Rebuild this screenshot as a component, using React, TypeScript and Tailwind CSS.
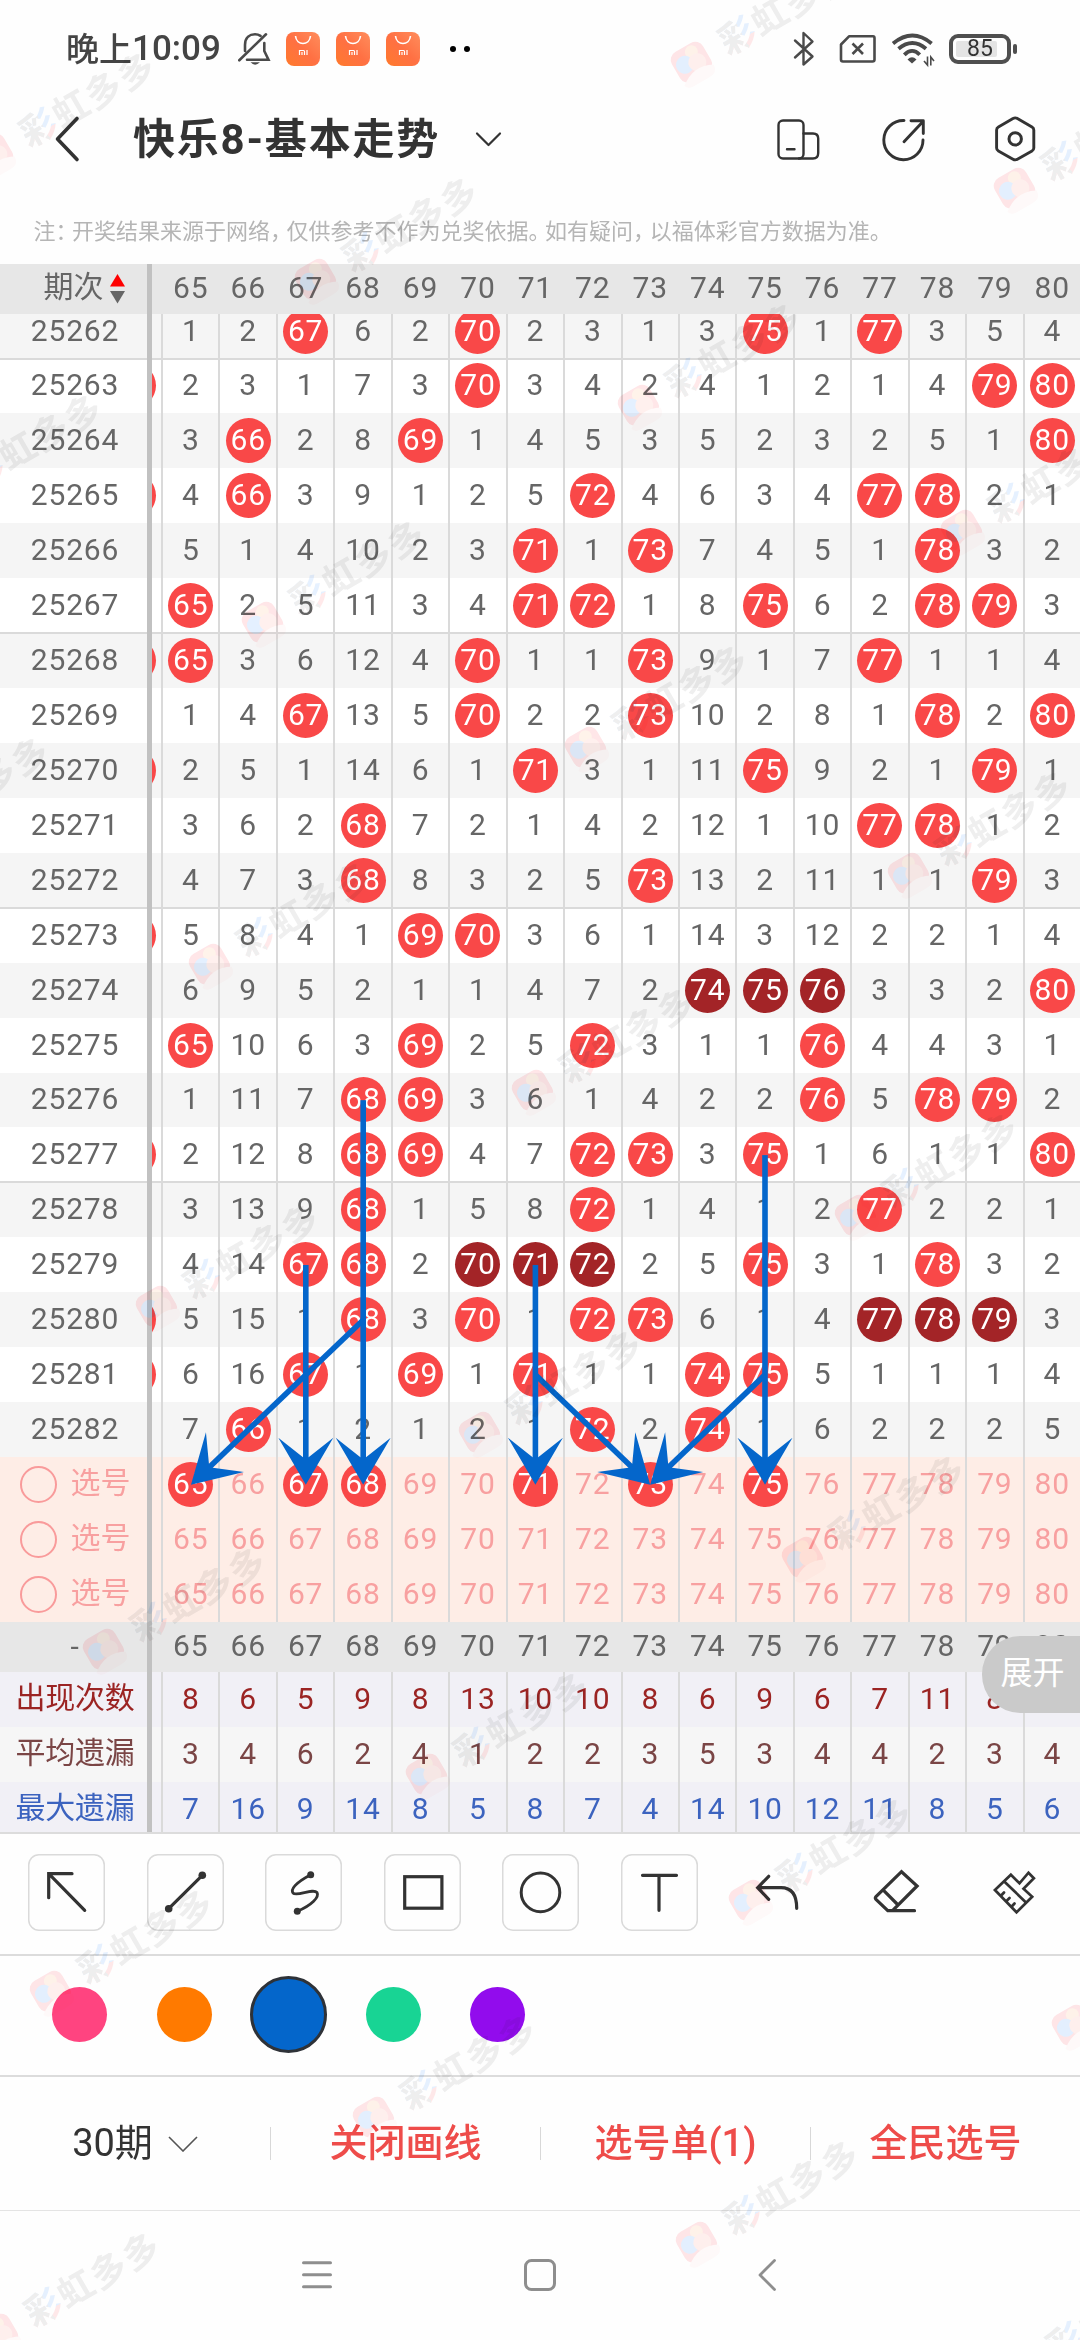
import { type ReactNode } from 'react';
import clsx from 'clsx';

const FIRST = 65;
const COLUMNS = Array.from({ length: 16 }, (_, i) => FIRST + i);

// values from 65 up are drawn numbers, smaller ones count the missed draws
const DRAWS: { id: number; prev?: boolean; values: number[] }[] = [
    { id: 25262, values: [1, 2, 67, 6, 2, 70, 2, 3, 1, 3, 75, 1, 77, 3, 5, 4] },
    { id: 25263, prev: true, values: [2, 3, 1, 7, 3, 70, 3, 4, 2, 4, 1, 2, 1, 4, 79, 80] },
    { id: 25264, values: [3, 66, 2, 8, 69, 1, 4, 5, 3, 5, 2, 3, 2, 5, 1, 80] },
    { id: 25265, prev: true, values: [4, 66, 3, 9, 1, 2, 5, 72, 4, 6, 3, 4, 77, 78, 2, 1] },
    { id: 25266, values: [5, 1, 4, 10, 2, 3, 71, 1, 73, 7, 4, 5, 1, 78, 3, 2] },
    { id: 25267, values: [65, 2, 5, 11, 3, 4, 71, 72, 1, 8, 75, 6, 2, 78, 79, 3] },
    { id: 25268, prev: true, values: [65, 3, 6, 12, 4, 70, 1, 1, 73, 9, 1, 7, 77, 1, 1, 4] },
    { id: 25269, values: [1, 4, 67, 13, 5, 70, 2, 2, 73, 10, 2, 8, 1, 78, 2, 80] },
    { id: 25270, prev: true, values: [2, 5, 1, 14, 6, 1, 71, 3, 1, 11, 75, 9, 2, 1, 79, 1] },
    { id: 25271, values: [3, 6, 2, 68, 7, 2, 1, 4, 2, 12, 1, 10, 77, 78, 1, 2] },
    { id: 25272, values: [4, 7, 3, 68, 8, 3, 2, 5, 73, 13, 2, 11, 1, 1, 79, 3] },
    { id: 25273, prev: true, values: [5, 8, 4, 1, 69, 70, 3, 6, 1, 14, 3, 12, 2, 2, 1, 4] },
    { id: 25274, values: [6, 9, 5, 2, 1, 1, 4, 7, 2, 74, 75, 76, 3, 3, 2, 80] },
    { id: 25275, values: [65, 10, 6, 3, 69, 2, 5, 72, 3, 1, 1, 76, 4, 4, 3, 1] },
    { id: 25276, values: [1, 11, 7, 68, 69, 3, 6, 1, 4, 2, 2, 76, 5, 78, 79, 2] },
    { id: 25277, prev: true, values: [2, 12, 8, 68, 69, 4, 7, 72, 73, 3, 75, 1, 6, 1, 1, 80] },
    { id: 25278, values: [3, 13, 9, 68, 1, 5, 8, 72, 1, 4, 1, 2, 77, 2, 2, 1] },
    { id: 25279, values: [4, 14, 67, 68, 2, 70, 71, 72, 2, 5, 75, 3, 1, 78, 3, 2] },
    { id: 25280, prev: true, values: [5, 15, 1, 68, 3, 70, 1, 72, 73, 6, 1, 4, 77, 78, 79, 3] },
    { id: 25281, prev: true, values: [6, 16, 67, 1, 69, 1, 71, 1, 1, 74, 75, 5, 1, 1, 1, 4] },
    { id: 25282, values: [7, 66, 1, 2, 1, 2, 1, 72, 2, 74, 1, 6, 2, 2, 2, 5] },
];

const PICKS = [[65, 67, 68, 71, 73, 75], [], []];

const STATS = [
    { label: '出现次数', row: 'bg-[#f1f0f6] text-[#9b2423]', values: [8, 6, 5, 9, 8, 13, 10, 10, 8, 6, 9, 6, 7, 11, 8, 8] },
    { label: '平均遗漏', row: 'bg-[#f6f6f6] text-[#7a4545]', values: [3, 4, 6, 2, 4, 1, 2, 2, 3, 5, 3, 4, 4, 2, 3, 4] },
    { label: '最大遗漏', row: 'bg-[#f1f0f6] text-[#3c63bf]', values: [7, 16, 9, 14, 8, 5, 8, 7, 4, 14, 10, 12, 11, 8, 5, 6] },
];

// row 0 is draw 25262, row 21 is the first pick row
const ARROWS = [
    { from: [68, 14], to: [68, 21] },
    { from: [67, 17], to: [67, 21] },
    { from: [71, 17], to: [71, 21] },
    { from: [75, 15], to: [75, 21] },
    { from: [68, 18], to: [65, 21] },
    { from: [71, 19], to: [73, 21] },
    { from: [75, 19], to: [73, 21] },
];

const ROW = 54.93;

// hits that sit in a run of three or more neighbours get the dark ball
function inStreak(values: number[], i: number) {
    let start = i;
    let end = i;
    while (values[start - 1] >= FIRST) start--;
    while (values[end + 1] >= FIRST) end++;
    return end - start >= 2;
}

function Ball({ value, dark }: { value: number; dark?: boolean }) {
    return (
        <span className={clsx('flex h-[45px] w-[45px] shrink-0 items-center justify-center rounded-full text-white', dark ? 'bg-[#a32427]' : 'bg-[#f94848]')}>
            <span className="-mt-px">{value}</span>
        </span>
    );
}

type RowProps = { className?: string; label: ReactNode; gutter?: ReactNode; cells: ReactNode[]; lines?: boolean };

function ChartRow({ className, label, gutter, cells, lines = true }: RowProps) {
    return (
        <div className={clsx('flex shrink-0', className)}>
            <div className="flex w-[147px] items-center justify-center pl-[3px]">{label}</div>
            <div className="w-[5px] bg-[#c1c1c1]" />
            <div className="flex w-[9px] items-center overflow-hidden">{gutter}</div>
            <div className="grid flex-1 grid-cols-16">
                {cells.map((cell, i) => (
                    <div key={i} className={clsx('flex items-center justify-center border-l-2', lines ? 'border-[#dadada]' : 'border-transparent')}>
                        {cell}
                    </div>
                ))}
            </div>
        </div>
    );
}

const num = (n: number) => <span className="-mt-px">{n}</span>;

function Arrows() {
    const x = (n: number) => 191 + (n - FIRST) * 57.4;
    const y = (r: number) => -10.3 + (r + 0.5) * ROW;
    return (
        <svg className="pointer-events-none absolute left-0 top-0" width="1080" height="1308" viewBox="0 0 1080 1308">
            {ARROWS.map(({ from, to }, i) => {
                const x1 = x(from[0]);
                const y1 = y(from[1]);
                const x2 = x(to[0]);
                const y2 = y(to[1]);
                const angle = (Math.atan2(y2 - y1, x2 - x1) * 180) / Math.PI;
                const length = Math.hypot(x2 - x1, y2 - y1);
                return (
                    <g key={i} transform={`translate(${x2} ${y2}) rotate(${angle})`} fill="#0466cb">
                        <rect x={-length} y="-2.8" width={length - 26} height="5.6" />
                        <path d="M0 0L-47 -27.5L-27.5 -2.8V2.8L-47 27.5Z" />
                    </g>
                );
            })}
        </svg>
    );
}

function StatusBar() {
    return (
        <div className="flex h-[98px] items-center text-[#444]">
            <div className="ml-[66px] mt-px flex w-[170px] items-center whitespace-nowrap font-medium">
                <span className="text-[33px]">晚上</span>
                <span className="text-[35px]">10:09</span>
            </div>
            <svg width="36" height="36" viewBox="0 0 36 36" fill="none" stroke="#4a4a4a" strokeWidth="2.6" strokeLinecap="round">
                <path d="M3.3 29.3L30 3.3M9 20V14C9 6 14 3.2 19 3.2Q22 3.2 24.5 4.8M28.3 12V20L32.5 28.7H11" />
                <path d="M14.5 31.3H24Q19 36 14.5 31.3Z" fill="#4a4a4a" stroke="none" />
            </svg>
            <div className="ml-[14px] flex gap-4">
                {[0, 1, 2].map(i => (
                    <div key={i} className="flex h-[34px] w-[34px] flex-col items-center rounded-[8px] bg-linear-to-tr from-[#ff7a2a] via-[#ff7043] to-[#ff8d5c]">
                        <svg width="34" height="34" viewBox="0 0 34 34" fill="none" stroke="#fff">
                            <path d="M9.5 4C10.5 14 23.5 14 24.5 4" strokeWidth="1.6" />
                            <path d="M13.5 23V18.5H17.5Q18.5 18.5 18.5 19.5V23M16 20V23M21 18V23" strokeWidth="1.2" />
                        </svg>
                    </div>
                ))}
            </div>
            <div className="ml-[30px] flex gap-2">
                <span className="h-[6px] w-[6px] rounded-full bg-black" />
                <span className="h-[6px] w-[6px] rounded-full bg-black" />
            </div>
            <svg className="ml-[323px]" width="22" height="36" viewBox="0 0 22 36" fill="none" stroke="#4a4a4a" strokeWidth="2.4" strokeLinejoin="round" strokeLinecap="round">
                <path d="M2 9.5L19.5 25.5L10.5 33.5V2L19.5 10.5L2 26.5" />
            </svg>
            <svg className="ml-[24px]" width="38" height="30" viewBox="0 0 38 30" fill="none" stroke="#4a4a4a" strokeWidth="2.6" strokeLinejoin="round">
                <path d="M10 2.3H34Q35.5 2.3 35.5 4V25.5Q35.5 27.5 33.5 27.5H4Q2 27.5 2 25.5V10.5Z" />
                <path d="M13.5 9.5L24 20M24 9.5L13.5 20" />
            </svg>
            <svg className="ml-[14px] mt-[3px]" width="44" height="36" viewBox="0 0 44 36" fill="none" stroke="#4a4a4a" strokeWidth="3.8">
                <path d="M2 11.5Q21.5 -4.5 40.6 11.5M7.5 16.8Q21.5 5.2 35 16.8M13.3 22.8Q21.2 15 28.7 22.8" />
                <path d="M16.5 27.5Q21 23 25.5 27.5L21 31.5Z" fill="#4a4a4a" stroke="none" />
                <path d="M36.5 24.5V33L33 29M39.8 33.5V25L43 29" strokeWidth="1.6" />
            </svg>
            <div className="ml-[14px] flex h-[30px] w-[62px] rounded-[9px] border-[4px] border-[#4f4f4f] p-[3px]">
                <div className="relative h-full w-[41px] rounded-[2px] bg-[#e4e4e4]">
                    <span className="absolute -top-[7px] left-[11px] text-[23px] leading-[30px] text-[#333]">85</span>
                </div>
            </div>
            <span className="ml-[2px] h-[10px] w-[4px] rounded-[2px] bg-[#4f4f4f]" />
        </div>
    );
}

function TitleBar() {
    return (
        <div className="flex h-[83px] items-center">
            <svg className="ml-[54px]" width="28" height="48" viewBox="0 0 28 48" fill="none" stroke="#333" strokeWidth="3.6" strokeLinecap="round" strokeLinejoin="round">
                <path d="M23 3.5L3.5 24L23 44.5" />
            </svg>
            <h1 className="ml-[51px] w-[306px] whitespace-nowrap text-[42px] font-bold tracking-[1.8px] text-[#333]">快乐8-基本走势</h1>
            <svg className="ml-[36px]" width="28" height="16" viewBox="0 0 28 16" fill="none" stroke="#333" strokeWidth="2.2" strokeLinecap="round" strokeLinejoin="round">
                <path d="M2 2.5L13.5 14L25 2.5" />
            </svg>
            <div className="ml-auto mr-[42px] flex items-center">
                <svg width="46" height="46" viewBox="775 117 46 46" fill="none" stroke="#333" strokeWidth="2.4" strokeLinecap="round">
                    <rect x="778.5" y="121.5" width="25" height="38" rx="4.5" />
                    <path d="M803.5 134.5H813Q818.2 134.5 818.2 139.5V154Q818.2 159.5 813 159.5H799M787 150.3H794.5" />
                </svg>
                <svg className="ml-[58px]" width="50" height="46" viewBox="879 117 50 46" fill="none" stroke="#333" strokeWidth="2.9" strokeLinecap="round" strokeLinejoin="round">
                    <path d="M904 121.5A19.6 19.6 0 1 0 923 141M904 142.7L923 122.5M911 121.8H923.3V134.5" />
                </svg>
                <svg className="ml-[63px]" width="46" height="50" viewBox="992 114.5 46 50" fill="none" stroke="#333" strokeWidth="2.9" strokeLinejoin="round">
                    <path d="M1013 119Q1015.2 117.8 1017.4 119L1032 127.5Q1033.8 128.5 1033.8 130.5V148.5Q1033.8 150.5 1032 151.5L1017.4 159.7Q1015.2 161 1013 159.7L998.4 151.5Q996.6 150.5 996.6 148.5V130.5Q996.6 128.5 998.4 127.5Z" />
                    <circle cx="1015.2" cy="139.4" r="6.2" strokeWidth="3" />
                </svg>
            </div>
        </div>
    );
}

function Notice() {
    const punct = 'tracking-[-5.5px]';
    return (
        <p className="flex h-[83px] items-center whitespace-nowrap pl-[33.5px] pt-[18px] text-[22px] text-[#b5b5b5]">
            注<span className={punct}>：</span>开奖结果来源于网络<span className={punct}>，</span>仅供参考不作为兑奖依据<span className={punct}>。</span>如有疑问<span className={punct}>，</span>以福体彩官方数据为准。
        </p>
    );
}

function TrendChart() {
    return (
        <div className="flex h-[1569px] flex-col overflow-hidden text-[30px] leading-none tracking-[0.8px] text-[#666]">
            <ChartRow
                className="h-[50px] bg-[#e7e7e7]"
                lines={false}
                label={
                    <span className="flex items-center gap-[6px] pb-1 pl-[18px] tracking-normal">
                        期次
                        <svg className="mt-1" width="15" height="30" viewBox="0 0 15 30">
                            <path d="M7.5 0L15 12.5H0Z" fill="#fe0000" />
                            <path d="M0 17H15L7.5 29.5Z" fill="#666" />
                        </svg>
                    </span>
                }
                cells={COLUMNS.map(num)}
            />
            <div className="relative h-[1308px] shrink-0 overflow-hidden">
                <div className="-mt-[10.3px]">
                    {DRAWS.map((draw, r) => (
                        <ChartRow
                            key={draw.id}
                            className={clsx(
                                'h-[54.93px]',
                                r % 2 ? 'bg-white' : 'bg-[#f5f5f5]',
                                r % 5 === 1 && 'shadow-[0_-1px_0_#dadada,inset_0_1px_0_#dadada]'
                            )}
                            label={num(draw.id)}
                            gutter={draw.prev && <span className="-ml-[41px] h-[45px] w-[45px] shrink-0 rounded-full bg-[#f94848]" />}
                            cells={draw.values.map((v, i) => (v >= FIRST ? <Ball value={v} dark={inStreak(draw.values, i)} /> : num(v)))}
                        />
                    ))}
                    {PICKS.map((picked, r) => (
                        <ChartRow
                            key={r}
                            className="h-[54.93px] bg-[#feede6] text-[#f8a0a0]"
                            label={
                                <span className="flex items-center gap-[14px] tracking-normal">
                                    <span className="h-[37px] w-[37px] rounded-full border-2 border-[#f99b9b]" />
                                    <span className="-mt-0.5">选号</span>
                                </span>
                            }
                            cells={COLUMNS.map(n => ((picked as number[]).includes(n) ? <Ball value={n} /> : num(n)))}
                        />
                    ))}
                </div>
                <Arrows />
            </div>
            <ChartRow className="h-[50px] bg-[#e7e7e7]" lines={false} label={<span>-</span>} cells={COLUMNS.map(num)} />
            {STATS.map(s => (
                <ChartRow
                    key={s.label}
                    className={clsx('h-[55px]', s.row)}
                    label={<span className="-mt-0.5 tracking-[-0.3px]">{s.label}</span>}
                    cells={s.values.map(num)}
                />
            ))}
        </div>
    );
}

const TOOLS = [
    <path d="M44 19.7H20.7V43.7M20.7 19.7L56.7 56.3" />,
    <>
        <path d="M21.7 54.7L55.3 21.3" />
        <circle cx="21.7" cy="54.7" r="3.8" fill="#333" stroke="none" />
        <circle cx="55.3" cy="21.3" r="3.8" fill="#333" stroke="none" />
    </>,
    <>
        <path d="M45.7 20.7C30 29 25.5 35.5 28 39C31.5 43 48 34 52 38.5C54.5 43 47 51 32.3 57.3" strokeWidth="2.8" />
        <circle cx="45.7" cy="20.7" r="3.5" fill="#333" stroke="none" />
        <circle cx="32.3" cy="57.3" r="3.5" fill="#333" stroke="none" />
    </>,
    <rect x="20.7" y="22.7" width="37.2" height="31.5" />,
    <circle cx="38.5" cy="38.4" r="19.3" strokeWidth="3" />,
    <path d="M21.5 21.3H55.5M38 21.3V56.3" />,
];

const ACTIONS = [
    <path d="M29.7 22.3L18.7 33.7L29.7 45.3M19 33.7H42Q57.7 33.7 57.7 54.3" />,
    <path d="M43.5 17.7L59.1 32L34.5 56.7H29.8L18 45.5Q16.7 44 18 42.5ZM25.8 36.7L39.1 50M34 56.7H56.5" />,
    <path d="M34.9 20.7L43.5 29.3L52.5 18.7L57.9 24.3L47.5 34.7L56.2 42.7L40.5 58.3L18.9 36ZM28.5 27.7L49.2 47.7M24.7 42L28 38.5M30 47.5L33.5 44M35.3 53L38.5 49.5" strokeWidth="2.7" />,
];

function ToolIcon({ children }: { children: ReactNode }) {
    return (
        <svg width="77" height="77" viewBox="0 0 77 77" fill="none" stroke="#333" strokeWidth="3.2" strokeLinecap="round">
            {children}
        </svg>
    );
}

function DrawingTools() {
    return (
        <>
            <div className="flex h-[122px] items-start justify-between border-t-2 border-[#dcdcdc] pl-[28px] pr-[27px] pt-[20px]">
                {TOOLS.map((icon, i) => (
                    <button key={i} className="h-[77px] w-[77px] rounded-[11px] shadow-[inset_0_0_0_1.5px_#dadada]">
                        <ToolIcon>{icon}</ToolIcon>
                    </button>
                ))}
                {ACTIONS.map((icon, i) => (
                    <button key={i} className="h-[77px] w-[77px]">
                        <ToolIcon>{icon}</ToolIcon>
                    </button>
                ))}
            </div>
            <div className="flex h-[121px] items-center border-t-2 border-[#dcdcdc] pb-[2px] pl-[52px]">
                <span className="h-[55px] w-[55px] rounded-full bg-[#ff4480]" />
                <span className="ml-[50px] h-[55px] w-[55px] rounded-full bg-[#ff7a00]" />
                <span className="ml-[38px] h-[77px] w-[77px] rounded-full border-[3px] border-[#2e3238] bg-[#0466cb]" />
                <span className="ml-[39px] h-[55px] w-[55px] rounded-full bg-[#18d494]" />
                <span className="ml-[49px] h-[55px] w-[55px] rounded-full bg-[#920ced]" />
            </div>
        </>
    );
}

function BottomBar() {
    return (
        <div className="flex h-[135px] items-center border-t-2 border-[#dcdcdc] text-[38px] leading-none">
            <div className="flex flex-1 items-center justify-center gap-[15px] text-[#333]">
                <span className="-mt-0.5">30期</span>
                <svg width="30" height="16" viewBox="0 0 30 16" fill="none" stroke="#555" strokeWidth="1.6">
                    <path d="M1 1L15 15L29 1" />
                </svg>
            </div>
            {['关闭画线', '选号单(1)', '全民选号'].map(text => (
                <div key={text} className="flex flex-1 items-center">
                    <span className="h-[33px] w-px bg-[#d8d8d8]" />
                    <span className="-mt-0.5 flex-1 text-center font-medium text-[#ee4c4a]">{text}</span>
                </div>
            ))}
        </div>
    );
}

function SystemNav() {
    return (
        <div className="flex h-[130px] border-t border-[#e4e4e4] pt-[46px]">
            <svg className="ml-[301px]" width="32" height="36" viewBox="0 0 32 36" stroke="#8e8e8e" strokeWidth="3" strokeLinecap="round">
                <path d="M2.5 5.7H29.5M2.5 17.7H29.5M2.5 29.7H29.5" />
            </svg>
            <svg className="ml-[189px]" width="36" height="36" viewBox="0 0 36 36" fill="none" stroke="#8e8e8e" strokeWidth="3">
                <rect x="3.5" y="3.5" width="29" height="29" rx="6" />
            </svg>
            <svg className="ml-[198px]" width="24" height="36" viewBox="0 0 24 36" fill="none" stroke="#8e8e8e" strokeWidth="2.8" strokeLinecap="round" strokeLinejoin="round">
                <path d="M18.5 3.5L4 18L18.5 32.5" />
            </svg>
        </div>
    );
}

function WatermarkTile({ x, y }: { x: number; y: number }) {
    return (
        <div className="absolute h-0 w-0" style={{ left: x, top: y }}>
            <div className="flex origin-[20px_22px] -translate-x-[20px] -translate-y-[22px] -rotate-30 items-center whitespace-nowrap">
                <svg className="shrink-0" width="40" height="44" viewBox="0 0 40 44">
                    <rect x="2" y="4" width="36" height="34" rx="9" fill="#ffe6e8" />
                    <circle cx="25" cy="12" r="6.5" fill="#fff3ea" />
                    <circle cx="13" cy="20" r="9" fill="#e4f0ff" />
                    <circle cx="25" cy="24" r="9" fill="#fff0ee" />
                    <path d="M2 38Q20 24 38 34Q38 43 28 43H10Q3 43 2 38Z" fill="#fffafa" />
                </svg>
                <span className="ml-[15px] text-[36px] font-bold leading-[44px] tracking-[1.5px] text-[#efefef]">
                    <span className="bg-[linear-gradient(to_right,#efefef_60%,transparent_60%),linear-gradient(#e6f1ff_60%,#ffe9ea_60%)] bg-clip-text text-transparent">彩</span>
                    虹多多
                </span>
            </div>
        </div>
    );
}

function Watermark() {
    const tiles: { x: number; y: number }[] = [];
    for (let a = -3; a <= 2; a++) {
        for (let b = -2; b <= 9; b++) {
            const x = 691.5 + a * 323 - b * 53;
            const y = 63.3 + a * 125.5 + b * 342.4;
            if (x > -200 && x < 1110 && y > -20 && y < 2440) tiles.push({ x, y });
        }
    }
    return (
        <div className="pointer-events-none absolute inset-0 overflow-hidden mix-blend-multiply" aria-hidden>
            {tiles.map(t => (
                <WatermarkTile key={`${t.x}-${t.y}`} x={t.x} y={t.y} />
            ))}
        </div>
    );
}

export default function App() {
    return (
        <div className="relative flex h-[2340px] w-[1080px] flex-col overflow-hidden bg-[#fefefe] font-['Roboto','Noto_Sans_CJK_SC',sans-serif]">
            <StatusBar />
            <TitleBar />
            <Notice />
            <TrendChart />
            <DrawingTools />
            <BottomBar />
            <SystemNav />
            <Watermark />
            <button className="absolute right-0 top-[1636px] h-[77px] w-[98px] rounded-l-[38px] bg-[#cacaca] pb-1 pl-[3px] text-[32px] text-white">展开</button>
        </div>
    );
}
